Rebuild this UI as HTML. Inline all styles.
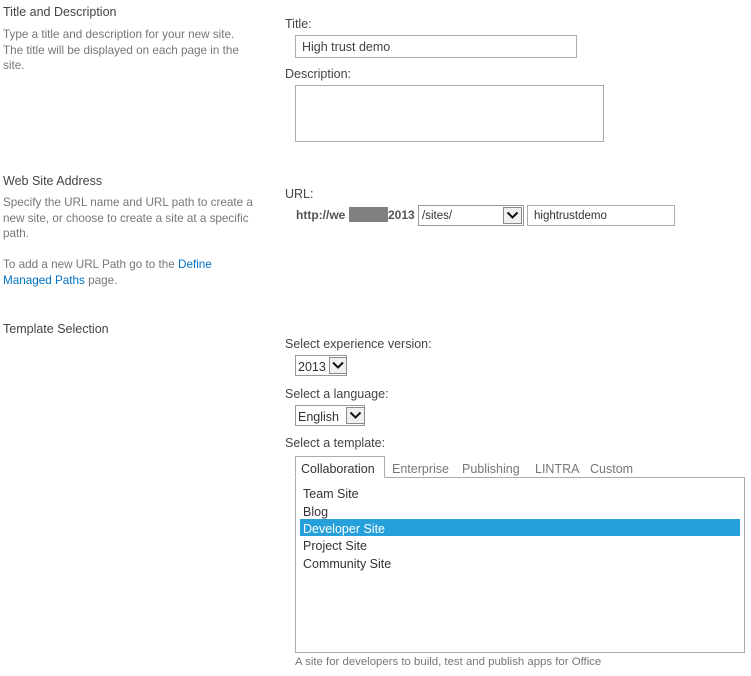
<!DOCTYPE html>
<html><head><meta charset="utf-8"><style>
body{margin:0;width:751px;height:676px;background:#fff;font-family:"Liberation Sans",sans-serif;position:relative;overflow:hidden}
div,span{position:absolute;white-space:nowrap}
.h{font-size:12.5px;color:#444;left:3px}
.d{font-size:11.7px;color:#777;left:3px;line-height:15.5px}
.l{font-size:12.5px;color:#444;left:285px}
.box{border:1px solid #ababab;background:#fff;box-sizing:border-box}
.t{font-size:12.5px;color:#444}
.arr{background:#f0f0f0;border:1px solid #8a8a8a;box-sizing:border-box}
a{color:#0072c6;text-decoration:none}
</style></head><body>
<div class="h" style="top:5px">Title and Description</div>
<div class="d" style="top:27px">Type a title and description for your new site.<br>The title will be displayed on each page in the<br>site.</div>
<div class="l" style="top:17px">Title:</div>
<div class="box" style="left:295px;top:35px;width:282px;height:23px"><span class="t" style="left:6px;top:4px">High trust demo</span></div>
<div class="l" style="top:67px">Description:</div>
<div class="box" style="left:295px;top:85px;width:309px;height:57px"></div>

<div class="h" style="top:174px">Web Site Address</div>
<div class="d" style="top:195px">Specify the URL name and URL path to create a<br>new site, or choose to create a site at a specific<br>path.<br><br>To add a new URL Path go to the <a>Define</a><br><a>Managed Paths</a> page.</div>
<div class="l" style="top:187px">URL:</div>
<div style="left:296px;top:208px;font-size:12px;font-weight:bold;color:#555">http://we</div>
<div style="left:349px;top:207px;width:39px;height:15px;background:#808080"></div>
<div style="left:388px;top:208px;font-size:12px;font-weight:bold;color:#555">2013</div>
<div class="box" style="left:418px;top:205px;width:106px;height:21px;border-color:#999"><span style="left:3px;top:4px;font-size:11.5px;color:#333">/sites/</span>
<div class="arr" style="left:84px;top:1px;width:19px;height:17px"><svg width="17" height="15" style="position:absolute;left:0;top:0"><path d="M3.5 4.5 L8.5 9.5 L13.5 4.5" stroke="#111" stroke-width="2" fill="none"/></svg></div></div>
<div class="box" style="left:527px;top:205px;width:148px;height:21px"><span style="left:6px;top:4px;font-size:11.5px;color:#333">hightrustdemo</span></div>

<div class="h" style="top:322px">Template Selection</div>
<div class="l" style="top:337px">Select experience version:</div>
<div class="box" style="left:295px;top:355px;width:52px;height:21px;border-color:#999"><span class="t" style="left:2px;top:4px;color:#333">2013</span>
<div class="arr" style="left:33px;top:1px;width:18px;height:17px"><svg width="16" height="15" style="position:absolute;left:0;top:0"><path d="M3 4.5 L8 9.5 L13 4.5" stroke="#111" stroke-width="2" fill="none"/></svg></div></div>
<div class="l" style="top:387px">Select a language:</div>
<div class="box" style="left:295px;top:405px;width:70px;height:21px;border-color:#999"><span class="t" style="left:2px;top:4px;color:#333">English</span>
<div class="arr" style="left:50px;top:1px;width:19px;height:17px"><svg width="17" height="15" style="position:absolute;left:0;top:0"><path d="M3.5 4.5 L8.5 9.5 L13.5 4.5" stroke="#111" stroke-width="2" fill="none"/></svg></div></div>
<div class="l" style="top:436px">Select a template:</div>

<div class="box" style="left:295px;top:477px;width:450px;height:176px"></div>
<div style="left:295px;top:456px;width:90px;height:22px;border:1px solid #ababab;border-bottom:1px solid #fff;background:#fff;box-sizing:border-box"></div>
<div class="t" style="left:301px;top:462px;color:#333">Collaboration</div>
<div class="t" style="left:392px;top:462px;color:#777">Enterprise</div>
<div class="t" style="left:462px;top:462px;color:#777">Publishing</div>
<div class="t" style="left:535px;top:462px;color:#777">LINTRA</div>
<div class="t" style="left:590px;top:462px;color:#777">Custom</div>
<div style="left:300px;top:519px;width:440px;height:17px;background:#26a0da"></div>
<div class="t" style="left:303px;top:487px;color:#333">Team Site</div>
<div class="t" style="left:303px;top:505px;color:#333">Blog</div>
<div class="t" style="left:303px;top:522px;color:#fff">Developer Site</div>
<div class="t" style="left:303px;top:539px;color:#333">Project Site</div>
<div class="t" style="left:303px;top:557px;color:#333">Community Site</div>
<div style="left:295px;top:656px;font-size:11.4px;color:#777">A site for developers to build, test and publish apps for Office</div>
</body></html>
